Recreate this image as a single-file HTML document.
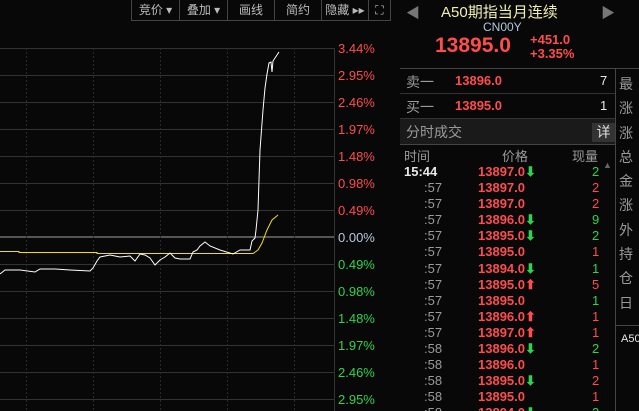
<!DOCTYPE html>
<html><head><meta charset="utf-8"><style>
*{margin:0;padding:0;box-sizing:border-box}
html,body{width:639px;height:411px;overflow:hidden}
body{background:#080808;position:relative;font-family:"Liberation Sans","Noto Sans CJK SC",sans-serif;font-size:13px;color:#c8c8c8}
.a{position:absolute;white-space:nowrap}
.r{color:#ff4c4c}.g{color:#2fd34f}.w{color:#e8e8e8}.gr{color:#9a9a9a}
.tb{position:absolute;top:0;height:21px;border:1px solid #444;border-top:none;border-right:none;color:#bbb;font-size:12px;line-height:20px;text-align:center}
.b{font-weight:bold}
</style></head><body>
<div class="tb" style="left:131px;width:48px">竞价 ▾</div>
<div class="tb" style="left:179px;width:48px">叠加 ▾</div>
<div class="tb" style="left:227px;width:47px">画线</div>
<div class="tb" style="left:274px;width:47px">简约</div>
<div class="tb" style="left:321px;width:47px">隐藏 ▸▸</div>
<div class="tb" style="left:368px;width:23px;border-right:1px solid #444">⛶</div>
<svg class="a" style="left:0;top:0" width="396" height="411">
<g stroke="#333" stroke-width="1">
<line x1="0" y1="48.5" x2="334" y2="48.5"/><line x1="0" y1="75.5" x2="334" y2="75.5"/><line x1="0" y1="102.5" x2="334" y2="102.5"/><line x1="0" y1="129.5" x2="334" y2="129.5"/><line x1="0" y1="156.5" x2="334" y2="156.5"/><line x1="0" y1="183.5" x2="334" y2="183.5"/><line x1="0" y1="210.5" x2="334" y2="210.5"/><line x1="0" y1="264.5" x2="334" y2="264.5"/><line x1="0" y1="291.5" x2="334" y2="291.5"/><line x1="0" y1="318.5" x2="334" y2="318.5"/><line x1="0" y1="345.5" x2="334" y2="345.5"/><line x1="0" y1="372.5" x2="334" y2="372.5"/><line x1="0" y1="399.5" x2="334" y2="399.5"/>
<line x1="334.5" y1="48" x2="334.5" y2="411"/>
</g>
<line x1="0" y1="237" x2="334" y2="237" stroke="#555" stroke-width="2"/>
<g stroke="#2a2a2a" stroke-dasharray="2,2"><line x1="26.5" y1="48" x2="26.5" y2="411"/><line x1="93.5" y1="48" x2="93.5" y2="411"/><line x1="160.5" y1="48" x2="160.5" y2="411"/><line x1="227.5" y1="48" x2="227.5" y2="411"/><line x1="294.5" y1="48" x2="294.5" y2="411"/></g>
<polyline fill="none" stroke="#f0e000" stroke-width="1" points="0,251.5 19,251.5 19,252.5 97,252.5 97,253.5 253,253.5 258,250 262,243 267,230 272,220 278,215"/>
<polyline fill="none" stroke="#fff" stroke-width="1" points="0,274 5,270 20,270 35,272 40,269 55,269 70,270 90,271 93,268 97,261 100,257 110,255 120,257 130,256 135,261 140,254 145,255 150,258 155,265 160,260 165,257 170,253 175,258 180,259 190,259 193,252 197,250 200,246 205,242 210,246 220,250 233,254 240,250 250,250 252,241 255,238 256,230 258,210 260,150 263,110 265,88 267,74 269,63 271,62 272,72 273,61 275,58 277,55 279,52"/>
<line x1="396.5" y1="0" x2="396.5" y2="411" stroke="#444"/>
</svg>
<div class="a r" style="left:338px;top:41px">3.44%</div>
<div class="a r" style="left:338px;top:68px">2.95%</div>
<div class="a r" style="left:338px;top:95px">2.46%</div>
<div class="a r" style="left:338px;top:122px">1.97%</div>
<div class="a r" style="left:338px;top:149px">1.48%</div>
<div class="a r" style="left:338px;top:176px">0.98%</div>
<div class="a r" style="left:338px;top:203px">0.49%</div>
<div class="a" style="left:338px;top:230px;color:#b8c8e0">0.00%</div>
<div class="a g" style="left:338px;top:257px">0.49%</div>
<div class="a g" style="left:338px;top:284px">0.98%</div>
<div class="a g" style="left:338px;top:311px">1.48%</div>
<div class="a g" style="left:338px;top:338px">1.97%</div>
<div class="a g" style="left:338px;top:365px">2.46%</div>
<div class="a g" style="left:338px;top:392px">2.95%</div>

<div class="a" style="left:406px;top:3px;color:#777;font-size:14px">◀</div>
<div class="a" style="left:601px;top:3px;color:#777;font-size:14px">▶</div>
<div class="a" style="left:441px;top:1px;color:#f0f0b0;font-size:15px">A50期指当月连续</div>
<div class="a" style="left:483px;top:20px;color:#b0c8e0;font-size:12px">CN00Y</div>
<div class="a r b" style="left:435px;top:34px;font-size:21px">13895.0</div>
<div class="a r b" style="left:530px;top:33px;font-size:13px;line-height:14px">+451.0<br>+3.35%</div>
<div class="a" style="left:400px;top:68px;width:239px;height:1px;background:#444"></div>
<div class="a" style="left:400px;top:93px;width:215px;height:1px;background:#333"></div>
<div class="a" style="left:400px;top:118px;width:215px;height:1px;background:#333"></div>
<div class="a" style="left:615px;top:68px;width:1px;height:343px;background:#444"></div>
<div class="a" style="left:400px;top:119px;width:215px;height:25px;background:#1a1a1a"></div>
<div class="a" style="left:400px;top:144px;width:215px;height:1px;background:#444"></div>
<div class="a gr" style="left:406px;top:72px;font-size:14px">卖一</div>
<div class="a r b" style="left:455px;top:73px">13896.0</div>
<div class="a w" style="left:600px;top:73px">7</div>
<div class="a gr" style="left:406px;top:97px;font-size:14px">买一</div>
<div class="a r b" style="left:455px;top:98px">13895.0</div>
<div class="a w" style="left:600px;top:98px">1</div>
<div class="a gr" style="left:406px;top:122px;font-size:14px">分时成交</div>
<div class="a" style="left:592px;top:123px;width:23px;height:19px;background:#333;color:#ddd;text-align:center;font-size:14px;line-height:19px">详</div>
<div class="a gr" style="left:404px;top:146px">时间</div>
<div class="a gr" style="left:502px;top:146px">价格</div>
<div class="a gr" style="left:572px;top:146px">现量</div>
<div class="a" style="left:603px;top:160px;color:#666;font-size:9px">▲</div>
<div class="a gr" style="left:619px;top:72px;font-size:14px;line-height:24.3px">最<br>涨<br>涨<br>总<br>金<br>涨<br>外<br>持<br>仓<br>日</div>
<div class="a" style="left:615px;top:325px;width:24px;height:1px;background:#444"></div>
<div class="a w" style="left:621px;top:333px;font-size:11px">A50</div>
<div class="a" style="left:404px;top:164px;font-family:'Liberation Sans',sans-serif;font-size:13px;line-height:16.1px">
<div style="position:relative;height:16.1px"><span class="a w b" style="left:0">15:44</span><span class="a r b" style="left:74px">13897.0<span class="g">⬇</span></span><span class="a g" style="left:188px">2</span></div>
<div style="position:relative;height:16.1px"><span class="a gr" style="left:20px">:57</span><span class="a r b" style="left:74px">13897.0</span><span class="a r" style="left:188px">2</span></div>
<div style="position:relative;height:16.1px"><span class="a gr" style="left:20px">:57</span><span class="a r b" style="left:74px">13897.0</span><span class="a r" style="left:188px">2</span></div>
<div style="position:relative;height:16.1px"><span class="a gr" style="left:20px">:57</span><span class="a r b" style="left:74px">13896.0<span class="g">⬇</span></span><span class="a g" style="left:188px">9</span></div>
<div style="position:relative;height:16.1px"><span class="a gr" style="left:20px">:57</span><span class="a r b" style="left:74px">13895.0<span class="g">⬇</span></span><span class="a g" style="left:188px">2</span></div>
<div style="position:relative;height:16.1px"><span class="a gr" style="left:20px">:57</span><span class="a r b" style="left:74px">13895.0</span><span class="a r" style="left:188px">1</span></div>
<div style="position:relative;height:16.1px"><span class="a gr" style="left:20px">:57</span><span class="a r b" style="left:74px">13894.0<span class="g">⬇</span></span><span class="a g" style="left:188px">1</span></div>
<div style="position:relative;height:16.1px"><span class="a gr" style="left:20px">:57</span><span class="a r b" style="left:74px">13895.0<span class="r">⬆</span></span><span class="a r" style="left:188px">5</span></div>
<div style="position:relative;height:16.1px"><span class="a gr" style="left:20px">:57</span><span class="a r b" style="left:74px">13895.0</span><span class="a g" style="left:188px">1</span></div>
<div style="position:relative;height:16.1px"><span class="a gr" style="left:20px">:57</span><span class="a r b" style="left:74px">13896.0<span class="r">⬆</span></span><span class="a r" style="left:188px">1</span></div>
<div style="position:relative;height:16.1px"><span class="a gr" style="left:20px">:57</span><span class="a r b" style="left:74px">13897.0<span class="r">⬆</span></span><span class="a r" style="left:188px">1</span></div>
<div style="position:relative;height:16.1px"><span class="a gr" style="left:20px">:58</span><span class="a r b" style="left:74px">13896.0<span class="g">⬇</span></span><span class="a g" style="left:188px">2</span></div>
<div style="position:relative;height:16.1px"><span class="a gr" style="left:20px">:58</span><span class="a r b" style="left:74px">13896.0</span><span class="a r" style="left:188px">1</span></div>
<div style="position:relative;height:16.1px"><span class="a gr" style="left:20px">:58</span><span class="a r b" style="left:74px">13895.0<span class="g">⬇</span></span><span class="a r" style="left:188px">2</span></div>
<div style="position:relative;height:16.1px"><span class="a gr" style="left:20px">:58</span><span class="a r b" style="left:74px">13895.0</span><span class="a r" style="left:188px">1</span></div>
<div style="position:relative;height:16.1px"><span class="a gr" style="left:20px">:58</span><span class="a r b" style="left:74px">13894.0<span class="g">⬇</span></span><span class="a g" style="left:188px">2</span></div>
</div>
</body></html>
